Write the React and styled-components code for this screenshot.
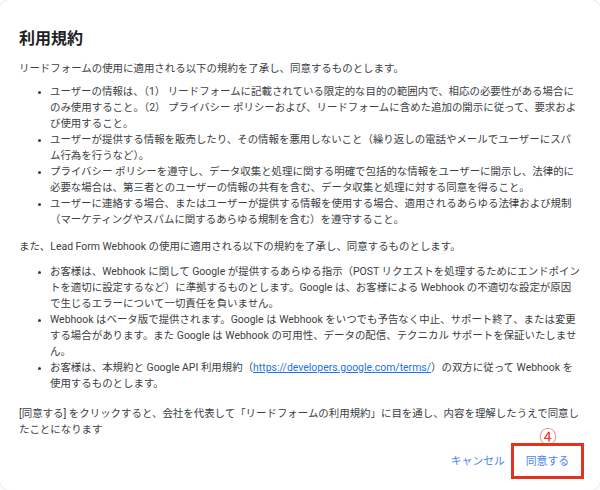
import React from "react";
import styled, { createGlobalStyle } from "styled-components";

const GlobalStyle = createGlobalStyle`
  html, body {
    margin: 0;
    padding: 0;
    background: #ffffff;
  }
  body {
    font-family: Roboto, "Noto Sans CJK JP", sans-serif;
  }
`;

const Dialog = styled.section`
  box-sizing: border-box;
  width: 600px;
  height: 490px;
  background: #fff;
  border-radius: 9px;
  box-shadow: 0 0 0 1px rgba(0, 0, 0, 0.07);
  padding: 28px 20px 0 19px;
  color: #3c4043;
  font-size: 10.45px;
  line-height: 16px;
  display: flex;
  flex-direction: column;
  overflow: hidden;
`;

const Title = styled.h1`
  margin: 0 0 11px;
  font-size: 16px;
  line-height: 22px;
  font-weight: 700;
  color: #202124;
`;

const Para = styled.p`
  margin: 0 0 ${(p) => p.$gap}px;
`;

const List = styled.ul`
  margin: 0 0 ${(p) => p.$gap}px;
  padding-left: 31px;
  list-style: none;
`;

const Item = styled.li`
  position: relative;
  &::before {
    content: "";
    position: absolute;
    left: -12px;
    top: 7px;
    width: 3px;
    height: 3px;
    border-radius: 50%;
    background: #3c4043;
  }
`;

const Link = styled.a`
  color: #1a73e8;
  text-decoration: underline;
`;

const Actions = styled.div`
  margin-top: auto;
  margin-bottom: 11px;
  margin-right: -4px;
  display: flex;
  justify-content: flex-end;
  align-items: center;
  gap: 6px;
`;

const TextButton = styled.button`
  position: relative;
  background: none;
  font-family: inherit;
  font-size: 10.8px;
  line-height: 17px;
  color: #4a86e8;
  cursor: pointer;
  border: ${(p) => (p.$marked ? "3px solid #e4321d" : "none")};
  padding: ${(p) => (p.$marked ? "7px 12px 6px" : "0")};
`;

const Marker = styled.span`
  position: absolute;
  left: 50%;
  bottom: 100%;
  transform: translateX(-46%);
  margin-bottom: 2px;
  font-size: 17px;
  line-height: 17px;
  color: #e4321d;
  font-family: "Noto Sans CJK JP", sans-serif;
`;

const firstTerms = [
  "ユーザーの情報は、（1） リードフォームに記載されている限定的な目的の範囲内で、相応の必要性がある場合にのみ使用すること。（2） プライバシー ポリシーおよび、リードフォームに含めた追加の開示に従って、要求および使用すること。",
  "ユーザーが提供する情報を販売したり、その情報を悪用しないこと（繰り返しの電話やメールでユーザーにスパム行為を行うなど）。",
  "プライバシー ポリシーを遵守し、データ収集と処理に関する明確で包括的な情報をユーザーに開示し、法律的に必要な場合は、第三者とのユーザーの情報の共有を含む、データ収集と処理に対する同意を得ること。",
  "ユーザーに連絡する場合、またはユーザーが提供する情報を使用する場合、適用されるあらゆる法律および規制（マーケティングやスパムに関するあらゆる規制を含む）を遵守すること。",
];

const webhookTerms = [
  "お客様は、Webhook に関して Google が提供するあらゆる指示（POST リクエストを処理するためにエンドポイントを適切に設定するなど）に準拠するものとします。Google は、お客様による Webhook の不適切な設定が原因で生じるエラーについて一切責任を負いません。",
  "Webhook はベータ版で提供されます。Google は Webhook をいつでも予告なく中止、サポート終了、または変更する場合があります。また Google は Webhook の可用性、データの配信、テクニカル サポートを保証いたしません。",
];

export default function App() {
  return (
    <>
      <GlobalStyle />
      <Dialog>
        <Title>利用規約</Title>
        <Para $gap={7}>リードフォームの使用に適用される以下の規約を了承し、同意するものとします。</Para>
        <List $gap={11}>
          {firstTerms.map((t) => (
            <Item key={t}>{t}</Item>
          ))}
        </List>
        <Para $gap={9}>また、Lead Form Webhook の使用に適用される以下の規約を了承し、同意するものとします。</Para>
        <List $gap={14}>
          {webhookTerms.map((t) => (
            <Item key={t}>{t}</Item>
          ))}
          <Item>
            お客様は、本規約と Google API 利用規約（
            <Link href="#">https://developers.google.com/terms/</Link>
            ）の双方に従って Webhook を使用するものとします。
          </Item>
        </List>
        <Para $gap={0}>
          [同意する] をクリックすると、会社を代表して「リードフォームの利用規約」に目を通し、内容を理解したうえで同意したことになります
        </Para>
        <Actions>
          <TextButton>キャンセル</TextButton>
          <TextButton $marked>
            <Marker>④</Marker>
            同意する
          </TextButton>
        </Actions>
      </Dialog>
    </>
  );
}
